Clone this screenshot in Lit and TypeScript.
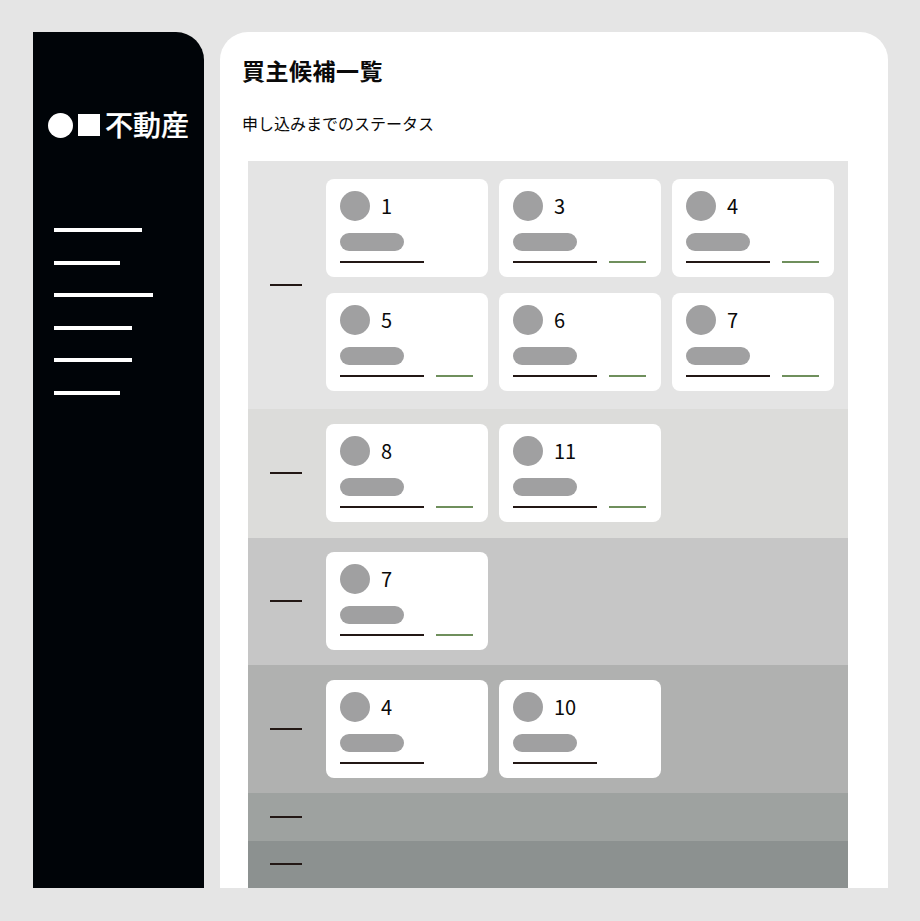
import { LitElement, html, css } from "lit";
import { customElement } from "lit/decorators.js";

type Card = { n: number; green: boolean };
type Row = { bg: string; height: number; trim: boolean; cards: Card[] };

const c = (n: number, green = true): Card => ({ n, green });

const ROWS: Row[] = [
  { bg: "#e4e4e4", height: 248, trim: false, cards: [c(1, false), c(3), c(4), c(5), c(6), c(7)] },
  { bg: "#dcdcda", height: 129, trim: true, cards: [c(8), c(11)] },
  { bg: "#c6c6c6", height: 127, trim: true, cards: [c(7)] },
  { bg: "#b0b1b0", height: 128, trim: false, cards: [c(4, false), c(10, false)] },
  { bg: "#9ea2a0", height: 48, trim: false, cards: [] },
  { bg: "#8c9190", height: 47, trim: true, cards: [] },
];

const NAV = [88, 66, 99, 78, 78, 66];

@customElement("app-root")
export class AppRoot extends LitElement {
  static styles = css`
    :host {
      display: block;
      height: 921px;
      box-sizing: border-box;
      padding: 32px 32px 33px 33px;
      background: #e5e5e5;
      font-family: "Noto Sans CJK JP", "Noto Sans", sans-serif;
    }
    .frame {
      display: flex;
      gap: 16px;
      height: 100%;
    }
    .side {
      width: 171px;
      flex: none;
      background: #000408;
      border-top-right-radius: 28px;
      padding: 78px 0 0 15px;
      box-sizing: border-box;
    }
    .logo {
      display: flex;
      align-items: center;
      height: 28px;
      color: #fff;
      font-size: 28px;
      line-height: 28px;
      font-weight: 500;
      -webkit-text-stroke: 0.2px #fff;
    }
    .dot {
      width: 25px;
      height: 25px;
      border-radius: 50%;
      background: #fff;
      flex: none;
      margin-top: 2px;
    }
    .sq {
      width: 22px;
      height: 22px;
      background: #fff;
      flex: none;
      margin: 2px 5px 0;
    }
    .nav {
      display: flex;
      flex-direction: column;
      gap: 28.6px;
      margin: 90px 0 0 6px;
    }
    .nav i {
      display: block;
      height: 4px;
      background: #fff;
    }
    .main {
      flex: 1;
      background: #fff;
      border-radius: 28px 28px 0 0;
      padding: 22px 40px 0 22px;
      overflow: hidden;
      display: flex;
      flex-direction: column;
      min-width: 0;
    }
    h1 {
      margin: 0;
      font-size: 23px;
      line-height: 32px;
      font-weight: 700;
      letter-spacing: 0.5px;
      color: #0a0a0a;
    }
    .sub {
      margin: 25px 0 0;
      font-size: 16px;
      line-height: 24px;
      color: #0a0a0a;
    }
    .board {
      margin: 26px 0 0 6px;
      display: flex;
      flex-direction: column;
      flex: 1;
    }
    .row {
      display: flex;
      align-items: center;
      flex: none;
      box-sizing: border-box;
    }
    .row.trim {
      padding-bottom: 1px;
    }
    .dash {
      width: 32px;
      height: 2px;
      background: #231815;
      margin: 0 24px 0 22px;
      flex: none;
    }
    .cards {
      display: grid;
      grid-template-columns: repeat(3, 162px);
      column-gap: 11px;
      row-gap: 16px;
    }
    .card {
      height: 98px;
      box-sizing: border-box;
      background: #fff;
      border-radius: 8px;
      padding: 12px 13px 0 14px;
    }
    .top {
      display: flex;
      align-items: center;
      height: 30px;
    }
    .avatar {
      width: 30px;
      height: 30px;
      border-radius: 50%;
      background: #a0a0a1;
      flex: none;
    }
    .num {
      margin-left: 11px;
      font-size: 20px;
      line-height: 30px;
      color: #0a0a0a;
    }
    .pill {
      width: 64px;
      height: 18px;
      margin-top: 12px;
      border-radius: 9px;
      background: #a0a0a1;
    }
    .lines {
      display: flex;
      gap: 12px;
      margin-top: 9.5px;
    }
    .lines i {
      display: block;
      height: 2px;
    }
    .dark {
      width: 84px;
      background: #231815;
    }
    .green {
      width: 37px;
      background: #6f8f5c;
    }
  `;

  render() {
    return html`
      <div class="frame">
        <aside class="side">
          <div class="logo"><span class="dot"></span><span class="sq"></span>不動産</div>
          <div class="nav">
            ${NAV.map((w) => html`<i style="width:${w}px"></i>`)}
          </div>
        </aside>
        <main class="main">
          <h1>買主候補一覧</h1>
          <p class="sub">申し込みまでのステータス</p>
          <div class="board">
            ${ROWS.map(
              (r) => html`
                <section class="row ${r.trim ? "trim" : ""}" style="background:${r.bg};height:${r.height}px">
                  <span class="dash"></span>
                  <div class="cards">
                    ${r.cards.map(
                      (card) => html`
                        <div class="card">
                          <div class="top">
                            <span class="avatar"></span>
                            <span class="num">${card.n}</span>
                          </div>
                          <div class="pill"></div>
                          <div class="lines">
                            <i class="dark"></i>
                            ${card.green ? html`<i class="green"></i>` : ""}
                          </div>
                        </div>
                      `
                    )}
                  </div>
                </section>
              `
            )}
          </div>
        </main>
      </div>
    `;
  }
}
